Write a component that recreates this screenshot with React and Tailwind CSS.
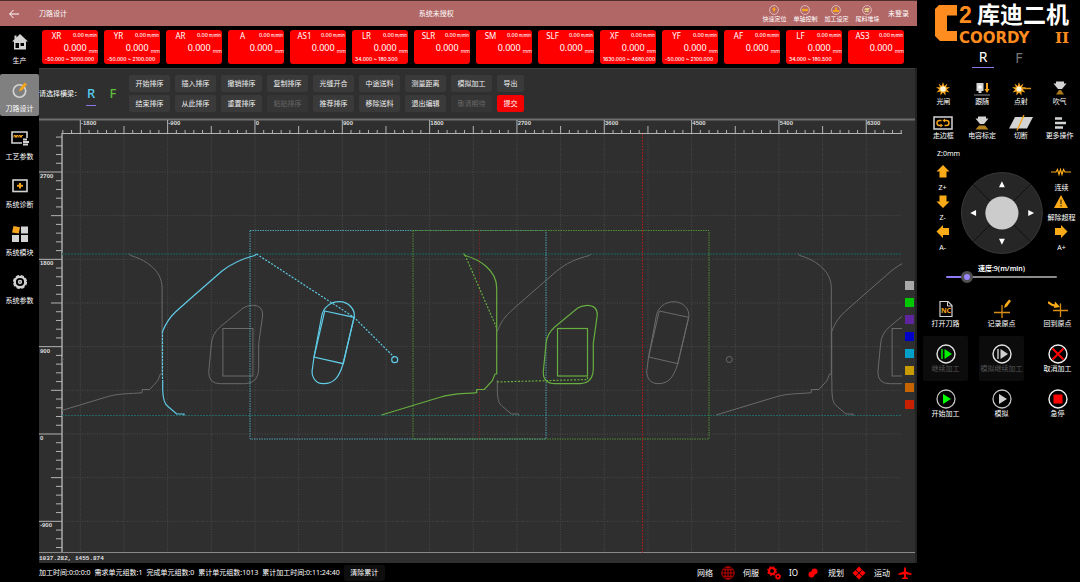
import { useState } from 'react';

const AXES = [
  { name: 'XR', range: '-50.000 ~ 3000.000' },
  { name: 'YR', range: '-50.000 ~ 2100.000' },
  { name: 'AR' },
  { name: 'A' },
  { name: 'AS1' },
  { name: 'LR', range: '34.000 ~ 180.500' },
  { name: 'SLR' },
  { name: 'SM' },
  { name: 'SLF' },
  { name: 'XF', range: '1630.000 ~ 4680.000' },
  { name: 'YF', range: '-50.000 ~ 2100.000' },
  { name: 'AF' },
  { name: 'LF', range: '34.000 ~ 180.500' },
  { name: 'AS3' },
];

const NAV = [
  {
    label: '生产',
    icon: (
      <svg className="w-4 h-4" viewBox="0 0 16 16" fill="#d4d4d4">
        <path fillRule="evenodd" d="M8 0L16 7.500H14V15.500H2V7.500H0L2.500 5.300V1.500H4.500V3.400ZM3.500 9V14H7V9ZM8.500 9V12H12V9Z" />
      </svg>
    ),
  },
  {
    label: '刀路设计',
    active: true,
    icon: (
      <svg className="w-4 h-4" viewBox="0 0 16 16" fill="none">
        <circle cx="7.500" cy="9" r="6.200" stroke="#d4d4d4" strokeWidth="1.600" />
        <path d="M7 9.500L8 6.500L12.500 0.500L15 2.200L10.200 8.300Z" fill="#f5a51d" />
      </svg>
    ),
  },
  {
    label: '工艺参数',
    icon: (
      <svg className="w-[18px] h-4" viewBox="0 0 18 16" fill="none">
        <path d="M16 8V2H1V13H11" stroke="#d4d4d4" strokeWidth="1.600" />
        <path d="M3 7.500V5.500H4.500V7.500M5.500 7.500V5.500H7V7.500M8 7.500V5.500H9.500V7.500M10.500 7.500V5.500H12" stroke="#f5a51d" />
        <path d="M12 9.500H16M12 12H18M12 14.500H17" stroke="#d4d4d4" strokeWidth="2" />
      </svg>
    ),
  },
  {
    label: '系统诊断',
    icon: (
      <svg className="w-4 h-4" viewBox="0 0 16 16" fill="none">
        <rect x="1" y="2" width="14" height="11.500" stroke="#d4d4d4" strokeWidth="1.600" />
        <path d="M8 5V10.500M5 7.800H11" stroke="#f5a51d" strokeWidth="2" />
      </svg>
    ),
  },
  {
    label: '系统模块',
    icon: (
      <svg className="w-4 h-4" viewBox="0 0 16 16" fill="#d4d4d4">
        <path d="M1.500 0L8 1.200L6.800 7.600L0 6.500Z" fill="#f5a51d" />
        <rect x="9" y="0.500" width="7" height="7" />
        <rect x="0" y="9" width="7" height="7" />
        <rect x="9" y="9" width="7" height="7" />
      </svg>
    ),
  },
  {
    label: '系统参数',
    icon: (
      <svg className="w-4 h-4" viewBox="0 0 16 16" fill="none" stroke="#d4d4d4">
        <circle cx="8" cy="8" r="6.500" strokeWidth="1.200" strokeDasharray="3.350 1.750" />
        <circle cx="8" cy="8" r="5.200" strokeWidth="2.200" />
        <circle cx="8" cy="8" r="1.400" strokeWidth="1.500" />
      </svg>
    ),
  },
];

const QUICK = [
  { label: '快速定位', icon: <path d="M5 2.500a1.600 1.600 0 0 1 1 2.800L5 7.500L4 5.300A1.600 1.600 0 0 1 5 2.500Z" fill="#f5a51d" /> },
  { label: '单轴控制', icon: <path d="M1.500 5L3.500 3V4H6.500V3L8.500 5L6.500 7V6H3.500V7Z" fill="#f5a51d" /> },
  { label: '加工设定', icon: <path d="M4 2.500H6V5H8V7H2V5H4Z" fill="#f5a51d" /> },
  { label: '尾料堆垛', icon: <path d="M3.500 3H8L6.500 5H2ZM3.500 5.500H7.500L6.500 7H2Z" fill="#e6d28a" /> },
];

const COMMANDS = [
  ['开始排序', '结束排序'],
  ['插入排序', '从此排序'],
  ['撤销排序', '重置排序'],
  ['复制排序', '粘贴排序'],
  ['光缝开合', '推荐排序'],
  ['中途送料', '移除送料'],
  ['测量距离', '退出编辑'],
  ['模拟加工', '敬请期待'],
];

const DISABLED = ['粘贴排序', '敬请期待'];

const BURST = 'M7 0L8.300 4L11.500 1.500L10 5.200L14 5.200L10.800 7.500L13.500 10.500L9.500 9.500L9.500 13.500L7 10.500L4.500 13.500L4.500 9.500L0.500 10.500L3.200 7.500L0 5.200L4 5.200L2.500 1.500L5.700 4Z';

const TOOLS = [
  {
    label: '光闸',
    icon: (
      <svg className="w-4 h-4" viewBox="-1 -1 16 16">
        <path d={BURST} fill="#f5a51d" />
        <circle cx="7" cy="7" r="2.800" fill="#fff6d8" />
      </svg>
    ),
  },
  {
    label: '跟随',
    icon: (
      <svg className="w-4 h-4" viewBox="0 0 16 16">
        <path d="M2.500 2H9.500V10H2.500ZM4.500 10H7.500V12H4.500Z" fill="#d4d4d4" />
        <circle cx="6" cy="6" r="1.800" fill="#fff" />
        <path d="M0 14H16" stroke="#8a8a8a" />
        <path d="M12 2H14V8H15.500L13 12L10.500 8H12Z" fill="#f5a51d" />
      </svg>
    ),
  },
  {
    label: '点射',
    icon: (
      <svg className="w-5 h-4" viewBox="-1 -1 20 16">
        <path d={BURST} fill="#f5a51d" />
        <path d="M9 6.500H19" stroke="#d68e14" strokeWidth="1.500" />
        <circle cx="7" cy="7" r="2.600" fill="#fff6d8" />
      </svg>
    ),
  },
  {
    label: '吹气',
    icon: (
      <svg className="w-4 h-4" viewBox="0 0 16 16">
        <path d="M4 0.500H12V2.500H14.500L10 8H6L1.500 2.500H4Z" fill="#d4d4d4" />
        <path d="M7 9H9L12 13.500H4Z" fill="#a8781c" />
      </svg>
    ),
  },
  {
    label: '走边框',
    icon: (
      <svg className="w-5 h-4" viewBox="0 0 20 16" fill="none">
        <rect x="1" y="2" width="18" height="12" stroke="#d4d4d4" strokeWidth="1.500" />
        <path d="M8.500 5.500H6.500Q4 5.500 4 8T6.500 10.500H8M11 5.500H13.500Q16 5.500 16 8T13.500 10.500H11.500" stroke="#f5a51d" strokeWidth="1.400" />
        <path d="M7.500 8.500L10 10.500L7.500 12.500ZM12 3.500L9.500 5.500L12 7.500Z" fill="#f5a51d" />
      </svg>
    ),
  },
  {
    label: '电容标定',
    icon: (
      <svg className="w-4 h-4" viewBox="0 0 16 16">
        <path d="M4 1.500H12V3.500H14.500L10 9H6L1.500 3.500H4Z" fill="#d4d4d4" />
        <path d="M5 10.500H11L14.500 14.500H1.500Z" fill="#b5831d" />
      </svg>
    ),
  },
  {
    label: '切断',
    icon: (
      <svg className="w-6 h-4" viewBox="0 0 24 16">
        <path d="M6 2H24L18 13.500H0Z" fill="#d4d4d4" />
        <path d="M15 0L8 15.500" stroke="#f5a51d" strokeWidth="1.300" />
      </svg>
    ),
  },
  {
    label: '更多操作',
    icon: (
      <svg className="w-4 h-4" viewBox="0 0 16 16">
        <path d="M3 3.500H10M3 8H14M3 12.500H11" stroke="#d4d4d4" strokeWidth="2.600" />
      </svg>
    ),
  },
];

const ARROW = 'M7 0L13.500 6.500H10.500V12.500H3.500V6.500H0.500Z';

const JOG_LEFT = [
  { label: 'Z+', icon: <path d={ARROW} fill="#fbab18" /> },
  { label: 'Z-', icon: <path d={ARROW} fill="#fbab18" transform="rotate(180 7 6.500)" /> },
  { label: 'A-', icon: <path d={ARROW} fill="#fbab18" transform="rotate(-90 7 6.500)" /> },
];

const JOG_RIGHT = [
  { label: '连续', icon: <path d="M-3 7H2L3.500 4.500L5 9.500L6.500 4.500L8 9.500L9.500 4.500L11 7H17" fill="none" stroke="#fbab18" strokeWidth="1.200" /> },
  {
    label: '解除超程',
    icon: (
      <>
        <path d="M7 0L14 13H0Z" fill="#fbab18" />
        <path d="M7 4.500V9M7 10V11.500" stroke="#3a2a08" strokeWidth="1.200" />
      </>
    ),
  },
  { label: 'A+', icon: <path d={ARROW} fill="#fbab18" transform="rotate(90 7 6.500)" /> },
];

const ACTIONS = [
  {
    label: '打开刀路',
    icon: (
      <>
        <path d="M4 2.500H12L16 6.500V17.500H4Z" fill="none" stroke="#d4d4d4" strokeWidth="1.200" />
        <path d="M11.500 2.500V7H16" fill="none" stroke="#d4d4d4" />
        <text x="10" y="14" textAnchor="middle" fontSize="7" fontWeight="700" fill="#f5a51d">NC</text>
      </>
    ),
  },
  {
    label: '记录原点',
    icon: (
      <>
        <path d="M2 13.500H18M10 6V19" stroke="#d68e14" strokeWidth="1.300" />
        <path d="M12 9L13 5.500L17 0.500L19 2L15 7.500Z" fill="#fbab18" />
      </>
    ),
  },
  {
    label: '回到原点',
    icon: (
      <>
        <path d="M5 11.500H20M12.500 4.500V18" stroke="#d68e14" strokeWidth="1.300" />
        <path d="M0 3Q4 7 9 6.500" stroke="#fbab18" strokeWidth="2.200" fill="none" />
        <path d="M7 2.500L12 8L6 9Z" fill="#fbab18" />
      </>
    ),
  },
  {
    label: '继续加工',
    disabled: true,
    icon: (
      <>
        <circle cx="10" cy="10" r="9" fill="none" stroke="#e4e4e4" strokeWidth="1.400" />
        <path d="M6 5V15" stroke="#00e000" strokeWidth="1.600" />
        <path d="M8.500 5L16 10L8.500 15Z" fill="#00f000" />
      </>
    ),
  },
  {
    label: '模拟继续加工',
    disabled: true,
    icon: (
      <>
        <circle cx="10" cy="10" r="9" fill="none" stroke="#e4e4e4" strokeWidth="1.400" />
        <path d="M6 5V15" stroke="#cfcfcf" strokeWidth="1.400" />
        <path d="M8.500 5L16 10L8.500 15Z" fill="#cfcfcf" />
      </>
    ),
  },
  {
    label: '取消加工',
    icon: (
      <>
        <circle cx="10" cy="10" r="9" fill="none" stroke="#f2f2f2" strokeWidth="1.400" />
        <path d="M4.500 4.500L15.500 15.500M15.500 4.500L4.500 15.500" stroke="#ff0000" strokeWidth="2" />
      </>
    ),
  },
  {
    label: '开始加工',
    icon: (
      <>
        <circle cx="10" cy="10" r="9" fill="none" stroke="#c4c4c4" strokeWidth="1.300" />
        <path d="M7 5L15 10L7 15Z" fill="#00ff00" />
      </>
    ),
  },
  {
    label: '模拟',
    icon: (
      <>
        <circle cx="10" cy="10" r="9" fill="none" stroke="#c4c4c4" strokeWidth="1.300" />
        <path d="M7 5L15 10L7 15Z" fill="#cfcfcf" />
      </>
    ),
  },
  {
    label: '急停',
    icon: (
      <>
        <circle cx="10" cy="10" r="9" fill="none" stroke="#f2f2f2" strokeWidth="1.400" />
        <rect x="5.500" y="5.500" width="9" height="9" fill="#ff0000" />
      </>
    ),
  },
];

const STATS = ['加工时间:0:0:0:0', '需求单元组数:1', '完成单元组数:0', '累计单元组数:1013', '累计加工时间:0:11:24:40'];

const STATUS = [
  {
    label: '网络',
    icon: (
      <g fill="none" stroke="#c00000">
        <circle cx="7" cy="7" r="6.200" />
        <ellipse cx="7" cy="7" rx="3" ry="6.200" />
        <path d="M7 1V13M1 7H13M2 3.800H12M2 10.200H12" />
      </g>
    ),
  },
  {
    label: '伺服',
    icon: (
      <g fill="none" stroke="#ff0000">
        <circle cx="5" cy="5" r="3" strokeWidth="2" />
        <circle cx="5" cy="5" r="4.300" strokeWidth="1.200" strokeDasharray="1.700 1.700" />
        <circle cx="11" cy="10.500" r="1.800" strokeWidth="1.500" />
        <circle cx="11" cy="10.500" r="2.800" strokeDasharray="1.200 1" />
      </g>
    ),
  },
  {
    label: 'IO',
    icon: (
      <g fill="#ff0000">
        <circle cx="8.500" cy="5.500" r="3" />
        <circle cx="5.500" cy="8.500" r="3" />
      </g>
    ),
  },
  {
    label: '规划',
    icon: <path d="M7 0.500L10 3.500L7 6.500L4 3.500ZM7 7.500L10 10.500L7 13.500L4 10.500ZM3.500 4L6.500 7L3.500 10L0.500 7ZM10.500 4L13.500 7L10.500 10L7.500 7Z" fill="#ff0000" />,
  },
  {
    label: '运动',
    icon: <path d="M7 1Q8 1.500 8 3V5.500L13.500 7.500V9L8 8.200V11L10 12V13H4V12L6 11V8.200L0.500 9V7.500L6 5.500V3Q6 1.500 7 1Z" fill="#ff0000" />,
  },
];

const SWATCHES = ['#a8a8a8', '#00c800', '#5f259f', '#0000c8', '#00a0c8', '#c89b00', '#c86400', '#c82000'];

const SHIFT = 334.6;

// Ruler and grid, in drawing pixels: 900 units are 87.330px
const UNIT = 87.33;
const X_LABELS = [-1800, -900, 0, 900, 1800, 2700, 3600, 4500, 5400, 6300];
const Y_LABELS = [2700, 1800, 900, 0, -900];
const X_TICKS = Array.from({ length: 97 }, (_, i) => i - 2);
const Y_TICKS = Array.from({ length: 48 }, (_, i) => i - 4);

function tickLength(i, major, mid, minor) {
  if (i % 10 === 0) return major;
  return i % 5 === 0 ? mid : minor;
}

function Profile({ x = 0 }) {
  return (
    <path
      transform={`translate(${x} 0)`}
      d="M463.500 253.500L465 255.500C478 259 496.700 269 496.700 288V374H495L492.300 380.700L484.300 389.500H476.700V392.700C465 394 453 393 440 397.300L381.500 415"
    />
  );
}

function Edge({ x = 0 }) {
  return (
    <g transform={`translate(${x} 0)`}>
      <path d="M256.500 254L254.700 255.500C241 259 232 263 221.700 271.300L190 299L175.700 311.700C168 319 165 325 162.700 331.300" />
      <path d="M162.700 380V390C163 399 164 404 168 406.500L176.700 414H184V415.500" />
    </g>
  );
}

function Pocket({ x = 0 }) {
  return (
    <g transform={`translate(${x} 0)`}>
      <path d="M587.300 305.300Q582 305.300 577.700 308L555 326.700Q546.500 334 546 344L543.300 371.700Q543 383.700 555 383.700H580Q593.300 383 593.300 368.300V343.300L597.300 315Q597.300 305.300 587.300 305.300Z" />
      <rect x="557.500" y="328.500" width="30" height="47.500" />
    </g>
  );
}

function Capsule({ x = 0 }) {
  return (
    <g transform={`translate(${x} 0)`}>
      <path d="M339.300 301.700C348 301.700 356 309 354 318L342.700 365C339 377 334 383.700 323.500 383.700C314 383.700 311 375 312.500 368L314 357L321.700 316C323 308 330 301.700 339.300 301.700Z" />
      <path d="M324.700 311L354 317.300L343.300 363.700L314 357Z" />
    </g>
  );
}

function PathCanvas() {
  return (
    <svg className="block w-full h-full" viewBox="39 118 876 435" preserveAspectRatio="xMinYMin slice" role="img" aria-label="刀路">
      <defs>
        <clipPath id="plot">
          <rect x="62" y="134" width="840" height="419" />
        </clipPath>
      </defs>

      {/* grid */}
      <g stroke="#4a4a4a" strokeDasharray="1 1.500" clipPath="url(#plot)">
        {Array.from({ length: 19 }, (_, i) => (
          <path key={'v' + i} d={`M${80.3 + (i * UNIT) / 2} 134V553`} />
        ))}
        {Array.from({ length: 9 }, (_, i) => (
          <path key={'h' + i} d={`M62 ${172 + (i * UNIT) / 2}H902`} />
        ))}
      </g>

      {/* rulers */}
      <path d="M39 119.500H915" stroke="#6e6e6e" strokeWidth="2" />
      <path d="M39 552.500H915" stroke="#8a8a8a" />
      <path d="M62 133V553" stroke="#8a8a8a" strokeWidth="2" />
      <path d="M62 133.500H902" stroke="#b4b4b4" />
      <g stroke="#b4b4b4">
        {X_TICKS.map((i) => {
          const x = 80.3 + (i * UNIT) / 10;
          return x < 902 && <path key={i} d={`M${x} 133V${133 - tickLength(i, 13, 7, 3)}`} />;
        })}
        {Y_TICKS.map((i) => {
          const y = 172 + (i * UNIT) / 10;
          return y < 552 && <path key={i} d={`M62 ${y}H${62 - tickLength(i, 23, 11, 6)}`} />;
        })}
      </g>
      <g fill="#dcdcdc" fontSize="6" fontWeight="700" fontFamily="Liberation Sans, sans-serif">
        {X_LABELS.map((n, i) => (
          <text key={n} x={81 + i * UNIT} y="125">{n}</text>
        ))}
        {Y_LABELS.map((n, i) => (
          <text key={n} x="40" y={178 + i * UNIT}>{n}</text>
        ))}
      </g>

      <g fill="none" clipPath="url(#plot)">
        <path d="M62 254H902" stroke="#1d5553" strokeWidth="1.500" strokeDasharray="2 1" />
        <path d="M62 415.500H902" stroke="#1f6664" strokeDasharray="2 1" />

        <g stroke="#6a6a6a">
          <Profile x={-SHIFT} />
          <Profile x={SHIFT} />
          <Edge x={SHIFT} />
          <Edge x={SHIFT * 2} />
          <path d="M831.700 331V380" />
          <Pocket x={-SHIFT} />
          <Pocket x={SHIFT} />
          <Capsule x={SHIFT} />
          <circle cx="60" cy="359.500" r="3" />
          <circle cx="729.300" cy="359.500" r="3" />
        </g>

        <rect x="250" y="230.500" width="296" height="208.500" stroke="#4f9fb4" strokeDasharray="1.500 1" />
        <rect x="413" y="230.500" width="296" height="208.500" stroke="#4f8d35" strokeDasharray="1.500 1" />
        <path d="M479.500 230V439" stroke="#7d2424" strokeDasharray="1.500 1.500" />
        <path d="M642.500 134V553" stroke="#c01414" strokeDasharray="1.500 1.500" />

        <g stroke="#5fcbe6" strokeWidth="1.200">
          <Edge />
          <path d="M162.500 331V380" strokeDasharray="2.500 1" />
          <Capsule />
          <circle cx="394.700" cy="359.700" r="3" />
          <path d="M256.500 254L354 317.300L394 357" strokeDasharray="2 1.500" />
        </g>

        <g stroke="#67ad3f" strokeWidth="1.200">
          <Profile />
          <Pocket />
          <path d="M465 255L496.700 328M497 382L587.500 379.500V376" strokeDasharray="2 1.500" />
        </g>
      </g>

      {SWATCHES.map((color, i) => (
        <rect key={color} x="905" y={281 + i * 17} width="9" height="9" fill={color} />
      ))}
    </svg>
  );
}

function AxisCard({ name, range }) {
  return (
    <div className="h-[34px] rounded-[3px] bg-[#ff0000] text-white flex flex-col overflow-hidden">
      <div className="flex items-center justify-between h-[11px] pr-px">
        <span className="w-[29px] text-center text-[8px] leading-[11px]">{name}</span>
        <span className="text-[5px] leading-[11px] font-medium whitespace-nowrap font-['Inter']">
          0.00<span className="text-[4px]"> m/min</span>
        </span>
      </div>
      <div className="flex items-end justify-end gap-[2px] h-[13px]">
        <span className="text-[9px] leading-[13px]">0.000</span>
        <span className="text-[5px] leading-[5px]">mm</span>
      </div>
      <div className="h-[10px] pl-[3px] text-[5px] leading-[11px] font-medium whitespace-nowrap font-['Inter']">{range}</div>
    </div>
  );
}

function CommandButton({ label, className = 'w-[41px]' }) {
  const disabled = DISABLED.includes(label);
  return (
    <button
      disabled={disabled}
      className={`h-[17px] rounded-[2px] text-[7px] leading-[8px] ${className} ${
        label === '提交' ? 'bg-[#f50000] text-white' : disabled ? 'bg-[#353535] text-[#666666]' : 'bg-[#3a3a3a] text-[#f0f0f0]'
      }`}
    >
      {label}
    </button>
  );
}

function JogColumn({ items }) {
  return (
    <div className="flex flex-col w-9">
      {items.map(({ label, icon }) => (
        <button key={label} className="h-[30px] flex flex-col items-center gap-[6px]">
          <svg className="w-[14px] h-[13px] overflow-visible" viewBox="0 0 14 13">{icon}</svg>
          <span className="text-[7px] leading-[8px] whitespace-nowrap">{label}</span>
        </button>
      ))}
    </div>
  );
}

function Logo() {
  return (
    <div className="flex pl-[18px] pt-[5px] h-[47px] font-['Liberation_Sans','Noto_Sans_CJK_SC',sans-serif] font-bold">
      <svg className="w-6 h-9 flex-shrink-0" viewBox="0 0 24 36">
        <path d="M4 0H22V10.500H12V26H22V36H5L0 31V4Z" fill="#ff8c1e" />
      </svg>
      <div className="flex flex-col w-[110px]">
        <div className="flex justify-between h-6">
          <span className="text-[23px] leading-[20px] text-[#ff8c1e]">2</span>
          <span className="text-[23px] leading-[20px] whitespace-nowrap">库迪二机</span>
        </div>
        <div className="flex justify-between text-[15px] leading-[18px] text-[#ff8c1e] font-['DejaVu_Sans']">
          <span>COORDY</span>
          <span className="font-['DejaVu_Serif']">II</span>
        </div>
      </div>
    </div>
  );
}

function ControlPanel() {
  const [speed, setSpeed] = useState(9);
  const percent = (speed / 60) * 100;

  return (
    <aside className="w-[163px] flex-shrink-0 bg-black text-white">
      <Logo />

      {/* ── Beam tabs ── */}
      <div className="flex pl-[55px] gap-[14px]">
        <button className="w-[22px] h-[21px] border-b border-[#8a78e8] text-[14px] leading-[20px]">R</button>
        <button className="w-[22px] h-[21px] text-[14px] leading-[20px] text-[#777777]">F</button>
      </div>

      <div className="grid grid-cols-4 pl-[7px] pr-px mt-[13px]">
        {TOOLS.map(({ label, icon }) => (
          <button key={label} className="h-[34px] flex flex-col items-center gap-px">
            {icon}
            <span className="text-[7px] leading-[8px] whitespace-nowrap">{label}</span>
          </button>
        ))}
      </div>

      {/* ── Jog pad ── */}
      <p className="pl-5 text-[7px] leading-[10px]">Z:0mm</p>
      <div className="flex justify-between pl-2 pr-px mt-[6px]">
        <JogColumn items={JOG_LEFT} />
        <svg className="w-[86px] h-[86px] mt-[5px]" viewBox="0 0 86 86">
          <circle cx="43" cy="43" r="41.500" fill="#262626" stroke="#3a3a3a" />
          <path d="M13.500 13.500L72.500 72.500M72.500 13.500L13.500 72.500" stroke="#111111" />
          <circle cx="43" cy="43" r="17" fill="#cccccc" />
          <path d="M43 10.500L46 16.500H40ZM43 75.500L46 69.500H40ZM10.500 43L16.500 40V46ZM76 43L70 40V46Z" fill="#ffffff" />
        </svg>
        <JogColumn items={JOG_RIGHT} />
      </div>

      <div className="flex flex-col pl-[29px] pr-[23px] mt-[8px]">
        <label htmlFor="speed" className="text-center text-[7px] leading-[10px] font-semibold">速度:{speed}(m/min)</label>
        <input
          id="speed"
          type="range"
          min="0"
          max="60"
          value={speed}
          onChange={(e) => setSpeed(Number(e.target.value))}
          className="w-full h-[2px] mt-[2px] appearance-none rounded-full [&::-webkit-slider-thumb]:appearance-none [&::-webkit-slider-thumb]:w-3 [&::-webkit-slider-thumb]:h-3 [&::-webkit-slider-thumb]:rounded-full [&::-webkit-slider-thumb]:border-[3px] [&::-webkit-slider-thumb]:border-[#505050] [&::-webkit-slider-thumb]:bg-[#9a86ff]"
          style={{ background: `linear-gradient(to right, #8f7cf5 ${percent}%, #8a8a8a ${percent}%)` }}
        />
      </div>

      <div className="grid grid-cols-3 gap-x-[11px] pl-[6px] mt-[13px]">
        {ACTIONS.map(({ label, icon, disabled }) => (
          <button
            key={label}
            disabled={disabled}
            className={`h-[45px] pt-2 rounded-[2px] flex flex-col items-center ${disabled ? 'bg-[#0c0c0c] text-[#555555]' : ''}`}
          >
            <svg className="w-5 h-5" viewBox="0 0 20 20">{icon}</svg>
            <span className="text-[7px] leading-[10px] whitespace-nowrap">{label}</span>
          </button>
        ))}
      </div>
    </aside>
  );
}

export default function App() {
  return (
    <div className="flex h-screen bg-black text-white font-['Noto_Sans','Noto_Sans_CJK_SC',sans-serif]">
      <div className="flex-1 min-w-0 flex flex-col">

        {/* ── Title bar ── */}
        <header className="h-[26px] flex-shrink-0 grid grid-cols-3 items-center bg-[#b26767] border-t border-[#4e2d2d] text-[7px] leading-[8px]">
          <div className="flex items-center">
            <button className="w-[39px] pl-[9px]" aria-label="返回">
              <svg className="w-[10px] h-[10px]" viewBox="0 0 10 10" fill="none" stroke="#ffffff">
                <path d="M10 5H0.700M4.500 1L0.700 5L4.500 9" />
              </svg>
            </button>
            <h1>刀路设计</h1>
          </div>
          <p className="pl-[113px] whitespace-nowrap">系统未授权</p>
          <div className="flex items-center justify-end pr-2">
            {QUICK.map(({ label, icon }) => (
              <button key={label} className="w-[31px] flex flex-col items-center">
                <svg className="w-[10px] h-[10px]" viewBox="0 0 10 10">
                  <circle cx="5" cy="5" r="4.400" fill="none" stroke="#e8cccc" strokeWidth="0.800" />
                  {icon}
                </svg>
                <span className="text-[6px] leading-[8px] whitespace-nowrap">{label}</span>
              </button>
            ))}
            <a href="#login" className="pl-[5px] whitespace-nowrap">未登录</a>
          </div>
        </header>

        <div className="flex flex-1 min-h-0">
          {/* ── Sidebar ── */}
          <nav className="w-[39px] flex-shrink-0 flex flex-col gap-[6px]">
            {NAV.map(({ label, icon, active }) => (
              <a
                key={label}
                href="#page"
                className={`h-[42px] pt-2 flex flex-col items-center gap-[7px] rounded-[2px] text-[7px] leading-[8px] whitespace-nowrap ${
                  active ? 'bg-[#808080]' : ''
                }`}
              >
                {icon}
                <span>{label}</span>
              </a>
            ))}
          </nav>

          <main className="flex-1 min-w-0 flex flex-col">
            {/* ── Axis readouts ── */}
            <section className="grid grid-cols-14 gap-[6px] pl-[3px] pr-[13px] py-1 flex-shrink-0">
              {AXES.map((axis) => (
                <AxisCard key={axis.name} {...axis} />
              ))}
            </section>

            <div className="flex-1 min-h-0 flex flex-col bg-[#2f2f2f] border-r-2 border-[#222222]">
              {/* ── Command bar ── */}
              <div className="h-[50px] flex-shrink-0 flex items-start border-t border-[#3c3c3c] pt-[6px]">
                <div className="w-[90px] flex items-center pt-[6px]">
                  <span className="w-[47px] text-[7px] leading-[8px] whitespace-nowrap">请选择横梁：</span>
                  <button className="w-[10px] h-[25px] text-[13px] leading-[25px] font-medium text-[#55cdf0] border-b border-[#8a78e8]">R</button>
                  <button className="w-[10px] h-[25px] ml-3 text-[13px] leading-[25px] font-medium text-[#5fbf3c]">F</button>
                </div>
                <div className="flex gap-[5px]">
                  {COMMANDS.map(([top, bottom]) => (
                    <div key={top} className="flex flex-col gap-[3px]">
                      <CommandButton label={top} />
                      <CommandButton label={bottom} />
                    </div>
                  ))}
                  <div className="flex flex-col gap-[3px]">
                    <CommandButton label="导出" className="w-[27px]" />
                    <CommandButton label="提交" className="w-[27px]" />
                  </div>
                </div>
              </div>

              <div className="flex-1 min-h-0 overflow-hidden">
                <PathCanvas />
              </div>
              <p className="h-[10px] flex-shrink-0 text-[6px] leading-[12px] font-bold text-[#e0e0e0] font-['Liberation_Mono',monospace]">1037.282, 1455.874</p>
            </div>

            {/* ── Status bar ── */}
            <footer className="h-[19px] flex-shrink-0 flex items-center justify-between pr-[5px] text-[7px] leading-[8px] whitespace-nowrap">
              <div className="flex items-center gap-1">
                {STATS.map((text) => (
                  <span key={text}>{text}</span>
                ))}
                <button className="w-[41px] h-4 rounded-[2px] bg-[#0e0e0e]">清除累计</button>
              </div>
              <div className="flex items-center gap-2 text-[8px]">
                {STATUS.map(({ label, icon }) => (
                  <span key={label} className="flex items-center gap-2">
                    {label}
                    <svg className="w-[14px] h-[14px]" viewBox="0 0 14 14">{icon}</svg>
                  </span>
                ))}
              </div>
            </footer>
          </main>
        </div>
      </div>

      <ControlPanel />
    </div>
  );
}
